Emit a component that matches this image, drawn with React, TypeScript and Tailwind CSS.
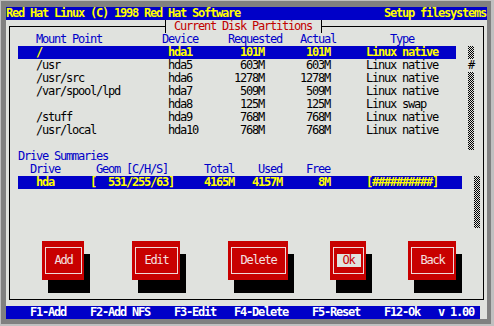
const put = (parts: [number, string][], from = 0, width = 0) => {
  let s = '';
  for (const [col, text] of parts) s = s.padEnd(col - from) + text;
  return s.padEnd(width);
};

const partitions = [
  ['/', 'hda1', '101M', '101M', 'Linux native'],
  ['/usr', 'hda5', '603M', '603M', 'Linux native'],
  ['/usr/src', 'hda6', '1278M', '1278M', 'Linux native'],
  ['/var/spool/lpd', 'hda7', '509M', '509M', 'Linux native'],
  ['', 'hda8', '125M', '125M', 'Linux swap'],
  ['/stuff', 'hda9', '768M', '768M', 'Linux native'],
  ['/usr/local', 'hda10', '768M', '768M', 'Linux native'],
];

const partRow = (p: string[], from: number, width = 0) =>
  put(
    [
      [5, p[0]],
      [27, p[1]],
      [43 - p[2].length, p[2]],
      [54 - p[3].length, p[3]],
      [60, p[4]],
    ],
    from,
    width
  );

const titleLine = put([
  [0, 'Red Hat Linux (C) 1998 Red Hat Software'],
  [63, 'Setup filesystems'],
]);

const helpLine = put([
  [4, 'F1-Add'],
  [14, 'F2-Add NFS'],
  [28, 'F3-Edit'],
  [38, 'F4-Delete'],
  [51, 'F5-Reset'],
  [63, 'F12-Ok'],
  [72, 'v 1.00'],
]);

const partHeader = put(
  [
    [5, 'Mount Point'],
    [26, 'Device'],
    [37, 'Requested'],
    [49, 'Actual'],
    [64, 'Type'],
  ],
  1
);

const driveHeader = put(
  [
    [4, 'Drive'],
    [15, 'Geom [C/H/S]'],
    [33, 'Total'],
    [42, 'Used'],
    [50, 'Free'],
  ],
  1
);

const driveRow = put(
  [
    [5, 'hda'],
    [14, '['],
    [17, '531/255/63]'],
    [33, '4165M'],
    [41, '4157M'],
    [52, '8M'],
    [60, '[##########]'],
  ],
  2,
  74
);

function Shade({ rows }: { rows: number }) {
  return (
    <svg width="6" height={rows * 13} className="block">
      <defs>
        <pattern id="chk" width="2" height="2" patternUnits="userSpaceOnUse">
          <rect width="1" height="1" fill="#000" />
          <rect x="1" y="1" width="1" height="1" fill="#000" />
        </pattern>
      </defs>
      <rect width="6" height={rows * 13} fill="url(#chk)" />
    </svg>
  );
}

function Button({ label, focused, className }: { label: string; focused?: boolean; className: string }) {
  return (
    <div className={`h-[39px] bg-[#c80000] shadow-[6px_13px_0_0_#000] flex ${className}`}>
      <div className="flex-1 my-[6px] ml-[3px] mr-[2px] border border-[#f0d8d8] flex items-center justify-center">
        <span
          className={
            focused
              ? 'h-[13px] bg-[#e0e2de] text-[#c80000] whitespace-pre'
              : 'h-[13px] text-[#f4e0e0] whitespace-pre'
          }
        >
          {` ${label} `}
        </span>
      </div>
    </div>
  );
}

export default function App() {
  return (
    <div className="w-[494px] h-[326px] bg-[#c0c0c0] pl-px pt-px pr-[3px] pb-[2px] font-['DejaVu_Sans_Mono',monospace] text-[12px] tracking-[-1.225px] leading-[13px]">
      <div className="h-full bg-[#808080] pl-[5px] pt-[6px]">
        <div className="w-[481px] h-[312px] bg-[#e0e2de] flex flex-col">
          <div className="h-[13px] bg-[#0000c8] text-[#ffff00] font-bold whitespace-pre">{titleLine}</div>

          <div className="mt-[6px] mx-[3px] border border-black pl-[2px] pb-[6px] flex flex-col">
            <div className="-mt-[7px] h-[13px] flex pl-[150px]">
              <div className="w-[3px]" />
              <div className="w-[3px] border-l border-black bg-[#e0e2de]" />
              <div className="bg-[#e0e2de] text-[#c00000] whitespace-pre">{' Current Disk Partitions '}</div>
              <div className="w-[3px] bg-[#e0e2de]" />
              <div className="w-[3px] border-l border-black" />
            </div>

            <div className="h-[13px] text-[#0000c8] whitespace-pre">{partHeader}</div>

            <div className="flex">
              <div className="w-[456px] flex flex-col">
                <div className="h-[13px] ml-[6px] w-[438px] bg-[#0000c8] text-[#ffff00] font-bold whitespace-pre">
                  {partRow(partitions[0], 2, 73)}
                </div>
                {partitions.slice(1).map((p) => (
                  <div key={p[1]} className="h-[13px] text-black whitespace-pre">
                    {partRow(p, 1)}
                  </div>
                ))}
              </div>
              <div className="w-[6px] flex flex-col">
                <Shade rows={1} />
                <div className="h-[13px] text-black">#</div>
                <Shade rows={6} />
              </div>
            </div>

            <div className="h-[13px] text-[#0000c8] whitespace-pre">{put([[2, 'Drive Summaries']], 1)}</div>
            <div className="h-[13px] text-[#0000c8] whitespace-pre">{driveHeader}</div>

            <div className="flex h-[52px]">
              <div className="w-[462px]">
                <div className="h-[13px] ml-[6px] w-[444px] bg-[#0000c8] text-[#ffff00] font-bold whitespace-pre">
                  {driveRow}
                </div>
              </div>
              <Shade rows={4} />
            </div>

            <div className="h-[13px]" />

            <div className="h-[52px] flex items-start">
              <Button label="Add" className="w-[42px] ml-[30px]" />
              <Button label="Edit" className="w-[48px] ml-[48px]" />
              <Button label="Delete" className="w-[60px] ml-[48px]" />
              <Button label="Ok" focused className="w-[36px] ml-[42px]" />
              <Button label="Back" className="w-[48px] ml-[42px]" />
            </div>
          </div>

          <div className="mt-[6px] h-[13px] w-[474px] bg-[#0000c8] text-white font-bold whitespace-pre">{helpLine}</div>
        </div>
      </div>
    </div>
  );
}
